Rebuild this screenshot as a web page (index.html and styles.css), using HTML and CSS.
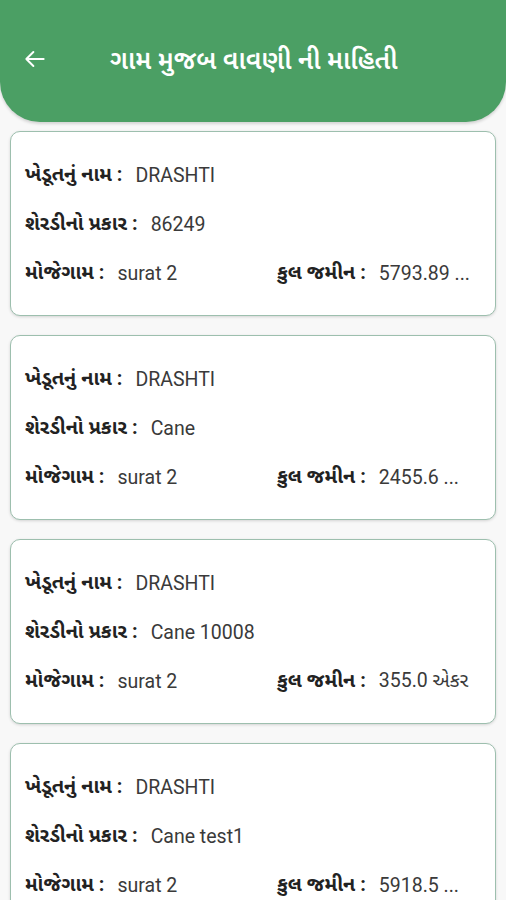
FILE: index.html
```html
<!DOCTYPE html>
<html lang="gu">
<head>
  <meta charset="UTF-8">
  <title>ગામ મુજબ વાવણી ની માહિતી</title>
  <link rel="stylesheet" href="styles.css">
</head>
<body>

  <header class="topbar">
    <svg class="back" width="26" height="26" viewBox="0 0 24 24">
      <path d="M20 12H4M10.5 5.5L4 12l6.5 6.5" fill="none" stroke="#fff" stroke-width="1.8" stroke-linecap="round" stroke-linejoin="round"/>
    </svg>
    <h1>ગામ મુજબ વાવણી ની માહિતી</h1>
  </header>

  <main class="list">
    <div class="card">
      <div class="row"><span class="label">ખેડૂતનું નામ :</span><span class="value">DRASHTI</span></div>
      <div class="row"><span class="label">શેરડીનો પ્રકાર :</span><span class="value">86249</span></div>
      <div class="row split">
        <div><span class="label">મોજેગામ :</span><span class="value">surat 2</span></div>
        <div><span class="label">કુલ જમીન :</span><span class="value">5793.89 ...</span></div>
      </div>
    </div>

    <div class="card">
      <div class="row"><span class="label">ખેડૂતનું નામ :</span><span class="value">DRASHTI</span></div>
      <div class="row"><span class="label">શેરડીનો પ્રકાર :</span><span class="value">Cane</span></div>
      <div class="row split">
        <div><span class="label">મોજેગામ :</span><span class="value">surat 2</span></div>
        <div><span class="label">કુલ જમીન :</span><span class="value">2455.6 ...</span></div>
      </div>
    </div>

    <div class="card">
      <div class="row"><span class="label">ખેડૂતનું નામ :</span><span class="value">DRASHTI</span></div>
      <div class="row"><span class="label">શેરડીનો પ્રકાર :</span><span class="value">Cane 10008</span></div>
      <div class="row split">
        <div><span class="label">મોજેગામ :</span><span class="value">surat 2</span></div>
        <div><span class="label">કુલ જમીન :</span><span class="value">355.0 એકર</span></div>
      </div>
    </div>

    <div class="card">
      <div class="row"><span class="label">ખેડૂતનું નામ :</span><span class="value">DRASHTI</span></div>
      <div class="row"><span class="label">શેરડીનો પ્રકાર :</span><span class="value">Cane test1</span></div>
      <div class="row split">
        <div><span class="label">મોજેગામ :</span><span class="value">surat 2</span></div>
        <div><span class="label">કુલ જમીન :</span><span class="value">5918.5 ...</span></div>
      </div>
    </div>
  </main>

</body>
</html>
```

FILE: styles.css
```css
body {
  margin: 0;
  font-family: Roboto, "Noto Sans", "Noto Sans Gujarati", sans-serif;
  background-color: #f8f8f8;
  color: #333;
  height: 900px;
  overflow: hidden;
}
.topbar {
  height: 122px;
  background-color: #4b9f64;
  border-radius: 0 0 40px 40px;
  display: flex;
  align-items: center;
  padding: 2px 0 0 22px;
  box-sizing: border-box;
  box-shadow: 0 2px 3px rgba(0,0,0,0.15);
}
.back {
  flex: none;
  margin-top: -6px;
}
.topbar h1 {
  margin: 0 0 0 62px;
  font-size: 26px;
  font-weight: 600;
  color: white;
}
.list {
  padding: 9px 10px 0;
}
.card {
  background: white;
  border: 1px solid #9dbfae;
  border-radius: 10px;
  box-shadow: 0 1px 3px rgba(0,0,0,0.15);
  height: 185px;
  box-sizing: border-box;
  padding: 19px 14px 0;
  margin-bottom: 19px;
}
.row {
  height: 49px;
  display: flex;
  align-items: center;
}
.split > div {
  display: flex;
  align-items: center;
}
.split > div:first-child {
  width: 252px;
}
.label {
  font-weight: bold;
  font-size: 20px;
  color: #222;
  margin-right: 13px;
}
.value {
  font-size: 19.5px;
  color: #3a3a3a;
}
```
